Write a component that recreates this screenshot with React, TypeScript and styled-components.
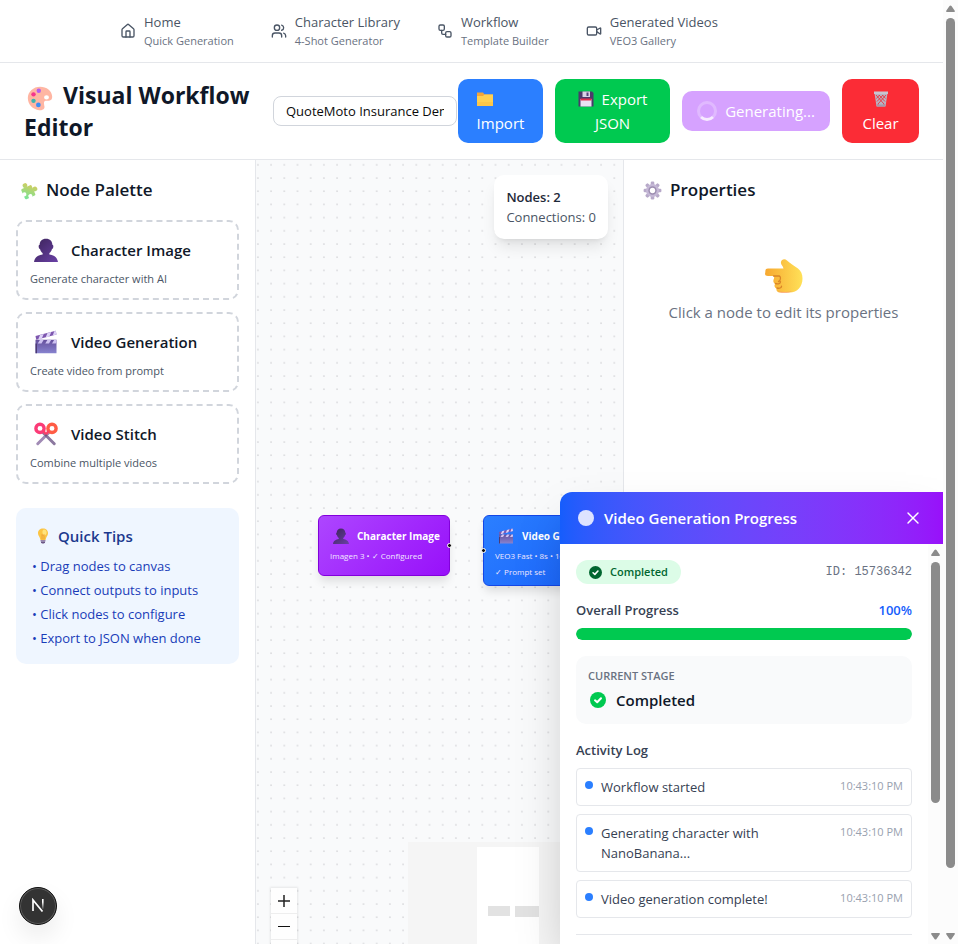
import React from 'react';
import styled, { createGlobalStyle, css } from 'styled-components';
import { House, Users, Workflow, Video, X } from 'lucide-react';

const GlobalStyle = createGlobalStyle`
  *, *::before, *::after { box-sizing: border-box; }
  body {
    margin: 0;
    background: #fff;
    color: #101828;
    font-family: "Open Sans", "Noto Sans", sans-serif;
    font-size: 15px;
    line-height: 24px;
    overflow: hidden;
  }
  h1, h2, h3, p, ul { margin: 0; padding: 0; }
  button, input { font: inherit; }
  button { border: 0; cursor: pointer; }
`;

/* ---------- Pictograms ---------- */

const Glyph = styled.svg<{ $size: number }>`
  width: ${(p) => p.$size}px;
  height: ${(p) => p.$size}px;
  flex: none;
  vertical-align: middle;
`;

type IconProps = { size: number };

const Palette = ({ size }: IconProps) => (
  <Glyph $size={size} viewBox="0 0 32 32" aria-hidden="true">
    <path fill="#ffb6a3" d="M16 2C8 2 1 8 1 16c0 8 6 14 14 15 4 .5 7-1.5 6.5-4.5C21 23 20 20 23 19.5c3-.5 8 1 8-5C31 7 24 2 16 2Zm8 10.5a3 2.7 0 1 1 0 5.4 3 2.7 0 0 1 0-5.4Z" fillRule="evenodd" />
    <circle cx="14.5" cy="7" r="2.7" fill="#b45cf0" />
    <circle cx="8" cy="11.5" r="2.7" fill="#f5368c" />
    <circle cx="8" cy="19.5" r="2.7" fill="#3fb5ad" />
    <circle cx="14" cy="24.5" r="2.9" fill="#3d8df5" />
  </Glyph>
);

const Folder = ({ size }: IconProps) => (
  <Glyph $size={size} viewBox="0 0 32 32" aria-hidden="true">
    <path fill="#f2a53a" d="M0 3h12l3 4h17v23H0z" />
    <path fill="#ffd051" d="M0 10h12l3-3h17v23H0z" />
    <path fill="#fcbf45" d="M0 22h32v8H0z" opacity=".6" />
  </Glyph>
);

const Floppy = ({ size }: IconProps) => (
  <Glyph $size={size} viewBox="0 0 32 32" aria-hidden="true">
    <path fill="#4b3a6b" d="M1 1h27l3 3v27H1z" />
    <path fill="#d9d3e6" d="M9 1h15v11H9z" />
    <path fill="#55437a" d="M17 3h4v7h-4z" />
    <path fill="#e8e2f2" d="M5 16h22v15H5z" />
    <path fill="#e0304f" d="M5 15h22v4H5z" />
  </Glyph>
);

const Bin = ({ size }: IconProps) => (
  <Glyph $size={size} viewBox="0 0 32 32" aria-hidden="true">
    <path fill="#b9b3c2" d="M3 4h26l-4 27H7z" />
    <path stroke="#ea3440" strokeWidth="1.8" fill="none" d="m6 8 16 18M12 8l12 13M19 8l6 7M26 8 10 26M20 8 8 21M13 8l-6 7M9 26l3 3M23 26l-3 3" />
    <path fill="#c9c4d0" d="M2 1h28v5H2z" />
    <path fill="#a39bae" d="M7 27h18l-1 4H8z" />
  </Glyph>
);

const Puzzle = ({ size }: IconProps) => (
  <Glyph $size={size} viewBox="0 0 32 32" aria-hidden="true">
    <defs>
      <linearGradient id="puzzle" gradientUnits="userSpaceOnUse" x1="4" y1="28" x2="26" y2="4">
        <stop offset="0" stopColor="#6ee79c" />
        <stop offset="1" stopColor="#e0c956" />
      </linearGradient>
    </defs>
    <g transform="rotate(-24 16 16)" fill="url(#puzzle)">
      <rect x="5" y="9" width="19" height="19" rx="2" />
      <circle cx="14" cy="6" r="4" />
      <circle cx="27" cy="18" r="4" />
      <circle cx="7" cy="19" r="3.5" fill="#fff" />
      <circle cx="15" cy="26" r="3.5" fill="#fff" />
    </g>
  </Glyph>
);

const Person = ({ size }: IconProps) => (
  <Glyph $size={size} viewBox="0 0 32 32" aria-hidden="true">
    <defs>
      <linearGradient id="person" x1="0" y1="0" x2="1" y2="1">
        <stop offset="0" stopColor="#3b2358" />
        <stop offset="1" stopColor="#6a41a6" />
      </linearGradient>
    </defs>
    <path fill="url(#person)" d="M16 1c5.5 0 8.5 3.5 8.5 8 2 0 1.5 5.5-.5 5.500-.8 2.800-2 4.500-3.500 5.500v2c5.500 1 10.500 3 11.500 10H0c1-7 6-9 11.500-10v-2c-1.500-1-2.700-2.700-3.500-5.500-2 0-2.500-5.500-.5-5.500 0-4.500 3-8 8.500-8Z" />
  </Glyph>
);

const Clapper = ({ size }: IconProps) => (
  <Glyph $size={size} viewBox="0 0 32 32" aria-hidden="true">
    <defs>
      <linearGradient id="clapper" x1="0" y1="0" x2="0" y2="1">
        <stop offset="0" stopColor="#66509c" />
        <stop offset="1" stopColor="#8783cf" />
      </linearGradient>
    </defs>
    <path fill="#7d56ae" d="m2 8 27-7 1 5L3 13z" />
    <path fill="#ddd2f7" d="m8 6.5 5-1.3-2.5 6-5 1.3zM18 4l5-1.4-2.5 6-5 1.3zM27 1.5l2-.5 1 5-5 1.3z" />
    <path fill="url(#clapper)" d="M2 13h28v18H2z" />
    <path fill="#cfc3f2" d="M8 13h5l-3 5H5zM18 13h5l-3 5h-5zM27 13h3v3l-1 2h-5z" />
    <path fill="#4c3b74" d="M2 18h2v13H2z" />
  </Glyph>
);

const Scissors = ({ size }: IconProps) => (
  <Glyph $size={size} viewBox="0 0 32 32" aria-hidden="true">
    <path stroke="#a18bb5" strokeWidth="4" strokeLinecap="round" d="M20 14 5 29" />
    <path stroke="#8b789f" strokeWidth="4" strokeLinecap="round" d="m12 14 15 15" />
    <circle cx="8" cy="8.5" r="5.5" fill="none" stroke="#fb3b77" strokeWidth="4.5" />
    <circle cx="24" cy="8.5" r="5.5" fill="none" stroke="#ff5c45" strokeWidth="4.5" />
    <path fill="#fb3f68" d="m11 12 3-1 2 3 2-3 3 1-3 5h-4z" />
    <circle cx="16" cy="18" r="1.5" fill="#6d5a82" />
  </Glyph>
);

const Bulb = ({ size }: IconProps) => (
  <Glyph $size={size} viewBox="0 0 32 32" aria-hidden="true">
    <path fill="#fbc444" d="M16 1c6 0 10 4 10 9.5 0 5-4 7-5 13.5H11C10 17.5 6 15.5 6 10.5 6 5 10 1 16 1Z" />
    <path fill="#ffe37c" d="M18 3c4 0 6 4 5 8-1 3-4 5-6 3-3-3-3-10 1-11Z" />
    <path fill="none" stroke="#e89a35" strokeWidth="1.5" d="M14 23V13l2 2 2-2v10" />
    <path fill="#9b87ad" d="M11 24h10v3H11z" />
    <path fill="#6d5886" d="M12 27h8v2l-2 2h-4l-2-2z" />
  </Glyph>
);

const Gear = ({ size }: IconProps) => (
  <Glyph $size={size} viewBox="0 0 32 32" aria-hidden="true">
    <g fill="#b7a9c9">
      {[0, 45, 90, 135].map((a) => (
        <rect key={a} x="13" y="1" width="6" height="30" rx="2" transform={`rotate(${a} 16 16)`} />
      ))}
    </g>
    <circle cx="16" cy="16" r="11" fill="#c5b8d6" />
    <circle cx="16" cy="16" r="7" fill="#9c8db0" />
    <circle cx="16" cy="16" r="4.5" fill="#fff" />
  </Glyph>
);

const PointingHand = ({ size }: IconProps) => (
  <Glyph $size={size} viewBox="0 0 38 38" aria-hidden="true">
    <defs>
      <linearGradient id="hand" x1="0" y1="0" x2="1" y2="0">
        <stop offset="0" stopColor="#f7a830" />
        <stop offset="1" stopColor="#ffe158" />
      </linearGradient>
    </defs>
    <path fill="url(#hand)" d="M3 11.5h15.5c-.5-3-3-4-2.5-6.5.5-3 4-3.5 6-1.5 3 3 7 5 11 8 3 2.5 4.5 5.5 4.5 10 0 8-5 14-13 14H16c-3.5 0-5-1.5-4.5-4-2-1-2.5-2.5-1.5-4.5-2-1.5-2-3.5-1-5.5.3-1.4 0-2.5-.5-2.5H3C.5 19-.5 18 .3 15.2.3 12.5 1 11.5 3 11.5Z" />
    <path fill="none" stroke="#d98527" strokeWidth="1.3" strokeLinecap="round" d="M8.5 19H14c2 0 2 5-.5 5.5M10.5 26.5c3 .8 5 0 5-1.8M12 31c2.5.6 4.5 0 4.5-1.8" />
    <path fill="#f98a67" opacity=".7" d="M13 34.2c4 .8 9 1 14 0-3 1.8-10 1.8-12 1z" />
  </Glyph>
);

const CheckBadge = ({ size, color }: IconProps & { color: string }) => (
  <Glyph $size={size} viewBox="0 0 16 16" aria-hidden="true">
    <circle cx="8" cy="8" r="8" fill={color} />
    <path d="m5 8.3 2.2 2L11 6.2" fill="none" stroke="#fff" strokeWidth="2" strokeLinecap="round" strokeLinejoin="round" />
  </Glyph>
);

/* ---------- Shell ---------- */

const Shell = styled.div`
  display: flex;
  height: 100vh;
`;

const Page = styled.div`
  position: relative;
  flex: 1;
  min-width: 0;
  display: flex;
  flex-direction: column;
  overflow: hidden;
`;

const Track = styled.div`
  width: 15px;
  flex: none;
  display: flex;
  flex-direction: column;
  align-items: center;
  justify-content: space-between;
  padding: 5px 0 4px;
  background: #fcfcfc;
`;

const Rail = styled.div`
  flex: 1;
  width: 9px;
  padding: 6px 0;
`;

const Thumb = styled.div<{ $length: string }>`
  height: ${(p) => p.$length};
  border-radius: 5px;
  background: #8b8b8b;
`;

const Arrow = ({ down }: { down?: boolean }) => (
  <svg width="9" height="7" viewBox="0 0 9 7" aria-hidden="true">
    <path
      fill="#8b8b8b"
      transform={down ? undefined : 'rotate(180 4.5 3.5)'}
      d="M1 0h7q1.5.4.6 1.6L5.5 6q-1 1-2 0L.4 1.6Q-.5.4 1 0Z"
    />
  </svg>
);

const Scrollbar = ({ length }: { length: string }) => (
  <Track aria-hidden="true">
    <Arrow />
    <Rail>
      <Thumb $length={length} />
    </Rail>
    <Arrow down />
  </Track>
);

/* ---------- Navigation ---------- */

const Nav = styled.nav`
  display: flex;
  gap: 37px;
  padding: 12px 24px 13px 120px;
  border-bottom: 1px solid #e5e7eb;
`;

const NavLink = styled.a`
  display: flex;
  align-items: center;
  gap: 8px;
  color: #4a5565;
  text-decoration: none;
  white-space: nowrap;
`;

const NavText = styled.span`
  display: flex;
  flex-direction: column;
  gap: 1px;
`;

const NavTitle = styled.span`
  font-size: 13px;
  line-height: 20px;
`;

const NavHint = styled.span`
  font-size: 11px;
  line-height: 16px;
  color: #6a7282;
`;

const links = [
  { icon: House, title: 'Home', hint: 'Quick Generation' },
  { icon: Users, title: 'Character Library', hint: '4-Shot Generator' },
  { icon: Workflow, title: 'Workflow', hint: 'Template Builder' },
  { icon: Video, title: 'Generated Videos', hint: 'VEO3 Gallery' },
];

/* ---------- Toolbar ---------- */

const Toolbar = styled.header`
  display: flex;
  align-items: center;
  gap: 20px;
  padding: 16px 24px;
  border-bottom: 1px solid #e5e7eb;
`;

const Title = styled.h1`
  flex: 1;
  font-size: 23px;
  font-weight: 700;
  line-height: 32px;
  svg { margin: 0 10px 0 3px; }
`;

const Actions = styled.div`
  display: flex;
  align-items: center;
  gap: 12px;
`;

const NameGroup = styled.div`
  display: flex;
  align-items: center;
  gap: 1px;
`;

const NameInput = styled.input`
  width: 184px;
  height: 30px;
  padding: 0 12px;
  border: 1px solid #d1d5dc;
  border-radius: 8px;
  background: #fff;
  color: #0a0a0a;
  font-size: 13px;
`;

const ActionButton = styled.button<{ $bg: string; $width: number; $single?: boolean }>`
  display: flex;
  flex-wrap: ${(p) => (p.$single ? 'nowrap' : 'wrap')};
  align-items: center;
  align-content: center;
  justify-content: center;
  column-gap: 8px;
  width: ${(p) => p.$width}px;
  padding: 8px 15px;
  border-radius: 10px;
  background: ${(p) => p.$bg};
  color: #fff;
  line-height: 24px;
`;

const IconLine = styled.span<{ $wide?: boolean }>`
  display: flex;
  align-items: center;
  height: 24px;
  ${(p) => p.$wide && css`width: 100%; padding-left: 4px;`}
`;

const Spinner = styled.span`
  flex: none;
  width: 20px;
  height: 20px;
  border: 3px solid rgba(255, 255, 255, 0.25);
  border-bottom-color: #f6ebff;
  border-radius: 50%;
`;

/* ---------- Workspace ---------- */

const Workspace = styled.main`
  flex: 1;
  min-height: 0;
  display: flex;
`;

const Side = styled.aside<{ $width: number; $edge: 'left' | 'right' }>`
  width: ${(p) => p.$width}px;
  flex: none;
  padding: 16px;
  ${(p) => (p.$edge === 'right' ? css`border-right: 1px solid #e5e7eb;` : css`border-left: 1px solid #e5e7eb;`)}
`;

const PanelTitle = styled.h2`
  display: flex;
  align-items: center;
  gap: 8px;
  padding-left: 3px;
  font-size: 17px;
  font-weight: 600;
  line-height: 28px;
`;

const CardList = styled.div`
  display: flex;
  flex-direction: column;
  gap: 12px;
  margin: 16px 0 24px;
`;

const PaletteCard = styled.div`
  padding: 12px 12px 11px;
  border: 2px dashed #d1d5dc;
  border-radius: 10px;
  cursor: grab;
`;

const CardHead = styled.div`
  display: flex;
  align-items: center;
  gap: 13px;
  height: 32px;
  margin-bottom: 5px;
  padding-left: 4px;
  font-weight: 600;
`;

const CardText = styled.p`
  font-size: 11px;
  line-height: 16px;
  color: #4a5565;
`;

const Tips = styled.section`
  padding: 16px;
  border-radius: 10px;
  background: #eff6ff;
`;

const TipsTitle = styled.h3`
  display: flex;
  align-items: center;
  gap: 7px;
  margin-bottom: 8px;
  padding-left: 3px;
  color: #1c398e;
  font-size: 15px;
  font-weight: 600;
`;

const TipList = styled.ul`
  display: flex;
  flex-direction: column;
  gap: 4px;
  list-style: none;
  color: #193cb8;
  font-size: 13px;
  line-height: 20px;
`;

const Empty = styled.div`
  display: flex;
  flex-direction: column;
  align-items: center;
  gap: 5px;
  padding-top: 53px;
  color: #6a7282;
`;

/* ---------- Canvas ---------- */

const Canvas = styled.section`
  position: relative;
  flex: 1;
  min-width: 0;
  overflow: hidden;
  background: #f9fafb;
`;

const DotGrid = styled.svg`
  position: absolute;
  inset: 0;
  width: 100%;
  height: 100%;
`;

const Stats = styled.div`
  position: absolute;
  top: 15px;
  right: 15px;
  padding: 12px;
  border-radius: 10px;
  background: #fff;
  box-shadow: 0 10px 15px -3px rgba(0, 0, 0, 0.1), 0 4px 6px -4px rgba(0, 0, 0, 0.1);
  color: #4a5565;
  font-size: 13px;
  line-height: 20px;
  strong { display: block; color: #1e2939; font-weight: 600; }
`;

const Node = styled.div<{ $x: number; $y: number; $w: number; $foot: number; $tone: 'purple' | 'blue' }>`
  position: absolute;
  left: ${(p) => p.$x}px;
  top: ${(p) => p.$y}px;
  width: ${(p) => p.$w}px;
  padding: 10px 11px ${(p) => p.$foot}px;
  border-radius: 6px;
  border: 1px solid ${(p) => (p.$tone === 'purple' ? '#8200db' : '#1447e6')};
  background: ${(p) => (p.$tone === 'purple'
    ? 'linear-gradient(135deg, #ad46ff, #9810fa)'
    : 'linear-gradient(135deg, #2b7fff, #155dfc)')};
  box-shadow: 0 7px 10px -2px rgba(0, 0, 0, 0.12);
  color: #fff;
  white-space: nowrap;
`;

const NodeTitle = styled.div`
  display: flex;
  align-items: center;
  gap: 8px;
  height: 20px;
  margin-bottom: 1px;
  padding-left: 3px;
  font-size: 10px;
  font-weight: 700;
`;

const NodeText = styled.p`
  padding-top: 2px;
  font-size: 8px;
  line-height: 14px;
  color: #f1e8ff;
`;

const Handle = styled.span<{ $side: 'left' | 'right' }>`
  position: absolute;
  top: 50%;
  ${(p) => p.$side}: -3px;
  width: 5px;
  height: 5px;
  margin-top: -3px;
  border: 1px solid #fff;
  border-radius: 50%;
  background: #111;
`;

const Controls = styled.div`
  position: absolute;
  left: 15px;
  bottom: -48px;
  display: flex;
  flex-direction: column;
  box-shadow: 0 0 2px 1px rgba(0, 0, 0, 0.08);
`;

const ControlButton = styled.button`
  display: flex;
  align-items: center;
  justify-content: center;
  width: 26px;
  height: 26px;
  padding: 0;
  border-bottom: 1px solid #eee;
  background: #fefefe;
`;

const MiniMap = styled.svg`
  position: absolute;
  right: 15px;
  bottom: -48px;
`;

const DevBadge = styled.button`
  position: absolute;
  left: 19px;
  bottom: 19px;
  width: 38px;
  height: 38px;
  padding: 0;
  border-radius: 50%;
  border: 1px solid #111;
  background: #333;
  box-shadow: inset 0 0 0 1px #5b5b5b, 0 12px 24px rgba(0, 0, 0, 0.08);
`;

/* ---------- Progress dialog ---------- */

const Dialog = styled.section`
  position: absolute;
  right: 0;
  bottom: 0;
  display: flex;
  flex-direction: column;
  width: 383px;
  max-width: 100%;
  height: 452px;
  border-top-left-radius: 12px;
  overflow: hidden;
  background: #fff;
  box-shadow: 0 25px 50px -12px rgba(0, 0, 0, 0.25);
`;

const DialogHead = styled.div`
  display: flex;
  align-items: center;
  padding: 14px 20px 14px 18px;
  background: linear-gradient(to right in oklab, #155dfc, #9810fa);
  color: #fff;
`;

const Pulse = styled.span`
  width: 16px;
  height: 16px;
  margin-right: 10px;
  border-radius: 50%;
  background: #dde3ff;
`;

const DialogTitle = styled.h2`
  flex: 1;
  font-size: 15px;
  font-weight: 600;
  line-height: 24px;
`;

const CloseButton = styled.button`
  display: flex;
  padding: 0;
  background: none;
  color: #fff;
`;

const DialogBody = styled.div`
  flex: 1;
  min-height: 0;
  display: flex;
`;

const DialogContent = styled.div`
  flex: 1;
  display: flex;
  flex-direction: column;
  gap: 16px;
  padding: 16px;
  overflow: hidden;
`;

const Row = styled.div`
  display: flex;
  align-items: center;
  justify-content: space-between;
`;

const Status = styled.span`
  display: flex;
  align-items: center;
  gap: 8px;
  height: 24px;
  padding: 0 13px;
  border-radius: 12px;
  background: #dcfce7;
  color: #016630;
  font-size: 11px;
  font-weight: 600;
`;

const JobId = styled.span`
  color: #6a7282;
  font-family: "Liberation Mono", monospace;
  font-size: 12px;
`;

const Label = styled.span`
  color: #364153;
  font-size: 13px;
  font-weight: 600;
  line-height: 20px;
`;

const Percent = styled(Label)`
  color: #155dfc;
`;

const Bar = styled.div`
  height: 12px;
  margin-top: 8px;
  border-radius: 6px;
  background: #e5e7eb;
  overflow: hidden;
`;

const BarFill = styled.div`
  height: 100%;
  border-radius: 6px;
  background: #00c950;
`;

const Stage = styled.div`
  padding: 12px;
  border-radius: 10px;
  background: #f9fafb;
`;

const StageLabel = styled.div`
  margin-bottom: 4px;
  color: #6a7282;
  font-size: 11px;
  font-weight: 600;
  line-height: 16px;
`;

const StageName = styled.div`
  display: flex;
  align-items: center;
  gap: 10px;
  padding-left: 2px;
  font-weight: 600;
`;

const LogTitle = styled.h3`
  color: #364153;
  font-size: 13px;
  font-weight: 600;
  line-height: 20px;
`;

const Log = styled.ul`
  display: flex;
  flex-direction: column;
  gap: 8px;
  margin-top: 8px;
  list-style: none;
`;

const LogItem = styled.li`
  display: flex;
  align-items: flex-start;
  gap: 8px;
  padding: 8px;
  border: 1px solid #e5e7eb;
  border-radius: 4px;
  color: #364153;
  font-size: 13px;
  line-height: 20px;
`;

const LogDot = styled.span`
  width: 8px;
  height: 8px;
  margin-top: 4px;
  flex: none;
  border-radius: 50%;
  background: #2b7fff;
`;

const LogText = styled.span`
  flex: 1;
`;

const LogTime = styled.time`
  color: #99a1af;
  font-size: 11px;
  line-height: 18px;
  white-space: nowrap;
`;

const Divider = styled.div`
  flex: none;
  border-top: 1px solid #e5e7eb;
`;

const cards = [
  { Icon: Person, name: 'Character Image', text: 'Generate character with AI' },
  { Icon: Clapper, name: 'Video Generation', text: 'Create video from prompt' },
  { Icon: Scissors, name: 'Video Stitch', text: 'Combine multiple videos' },
];

const tips = ['Drag nodes to canvas', 'Connect outputs to inputs', 'Click nodes to configure', 'Export to JSON when done'];

const log = ['Workflow started', 'Generating character with NanoBanana...', 'Video generation complete!'];

export default function App() {
  const progress = 100;
  return (
    <>
      <GlobalStyle />
      <Shell>
        <Page>
          <Nav>
            {links.map(({ icon: Icon, title, hint }) => (
              <NavLink href="#" key={title}>
                <Icon size={16} />
                <NavText>
                  <NavTitle>{title}</NavTitle>
                  <NavHint>{hint}</NavHint>
                </NavText>
              </NavLink>
            ))}
          </Nav>

          <Toolbar>
            <Title><Palette size={26} />Visual Workflow Editor</Title>
            <Actions>
              <NameGroup>
                <NameInput aria-label="Workflow name" defaultValue="QuoteMoto Insurance Demo" />
                <ActionButton $bg="#2b7fff" $width={85}>
                  <IconLine $wide><Folder size={16} /></IconLine>
                  <span>Import</span>
                </ActionButton>
              </NameGroup>
              <ActionButton $bg="#00c950" $width={115}>
                <IconLine><Floppy size={16} /></IconLine>
                <span>Export</span>
                <span>JSON</span>
              </ActionButton>
              <ActionButton $bg="#d6a2ff" $width={148} $single>
                <Spinner />
                <span>Generating...</span>
              </ActionButton>
              <ActionButton $bg="#fb2c36" $width={77}>
                <IconLine><Bin size={16} /></IconLine>
                <span>Clear</span>
              </ActionButton>
            </Actions>
          </Toolbar>

          <Workspace>
            <Side $width={256} $edge="right">
              <PanelTitle><Puzzle size={19} />Node Palette</PanelTitle>
              <CardList>
                {cards.map(({ Icon, name, text }) => (
                  <PaletteCard key={name} draggable>
                    <CardHead><Icon size={24} />{name}</CardHead>
                    <CardText>{text}</CardText>
                  </PaletteCard>
                ))}
              </CardList>
              <Tips>
                <TipsTitle><Bulb size={16} />Quick Tips</TipsTitle>
                <TipList>
                  {tips.map((tip) => <li key={tip}>• {tip}</li>)}
                </TipList>
              </Tips>
            </Side>

            <Canvas>
              <DotGrid aria-hidden="true">
                <defs>
                  <pattern id="dots" width="13.2" height="13.2" patternUnits="userSpaceOnUse">
                    <circle cx="1.9" cy="4.7" r=".55" fill="#91919a" />
                  </pattern>
                </defs>
                <rect width="100%" height="100%" fill="url(#dots)" />
              </DotGrid>
              <Node $x={62} $y={355} $w={132} $foot={12} $tone="purple">
                <NodeTitle><Person size={16} />Character Image</NodeTitle>
                <NodeText>Imagen 3 • ✓ Configured</NodeText>
                <Handle $side="right" />
              </Node>
              <Node $x={227} $y={355} $w={155} $foot={6} $tone="blue">
                <NodeTitle><Clapper size={16} />Video Generation</NodeTitle>
                <NodeText>VEO3 Fast • 8s • 16:9</NodeText>
                <NodeText>✓ Prompt set</NodeText>
                <Handle $side="left" />
              </Node>
              <MiniMap width="200" height="150" viewBox="0 0 200 150" aria-hidden="true">
                <rect width="200" height="150" fill="#f5f5f5" />
                <rect x="69" y="5" width="62" height="145" fill="#fff" />
                <rect x="80" y="64" width="22" height="10" fill="#e2e2e2" />
                <rect x="107" y="64" width="24" height="11" fill="#e2e2e2" />
              </MiniMap>
              <Controls>
                <ControlButton aria-label="Zoom in">
                  <svg width="12" height="12" viewBox="0 0 12 12"><path d="M6 0v12M0 6h12" stroke="#222" strokeWidth="1.5" /></svg>
                </ControlButton>
                <ControlButton aria-label="Zoom out">
                  <svg width="12" height="12" viewBox="0 0 12 12"><path d="M0 5.5h12" stroke="#111" strokeWidth="1" /></svg>
                </ControlButton>
                <ControlButton aria-label="Fit view" />
                <ControlButton aria-label="Toggle interactivity" />
              </Controls>
              <Stats>
                <strong>Nodes: 2</strong>
                Connections: 0
              </Stats>
            </Canvas>

            <Side $width={320} $edge="left">
              <PanelTitle><Gear size={19} />Properties</PanelTitle>
              <Empty>
                <PointingHand size={38} />
                <p>Click a node to edit its properties</p>
              </Empty>
            </Side>
          </Workspace>

          <Dialog role="dialog" aria-label="Video Generation Progress">
            <DialogHead>
              <Pulse />
              <DialogTitle>Video Generation Progress</DialogTitle>
              <CloseButton aria-label="Close"><X size={20} strokeWidth={1.7} /></CloseButton>
            </DialogHead>
            <DialogBody>
              <DialogContent>
                <Row>
                  <Status><CheckBadge size={13} color="#016630" />Completed</Status>
                  <JobId>ID: 15736342</JobId>
                </Row>
                <div>
                  <Row>
                    <Label>Overall Progress</Label>
                    <Percent>{progress}%</Percent>
                  </Row>
                  <Bar><BarFill style={{ width: `${progress}%` }} /></Bar>
                </div>
                <Stage>
                  <StageLabel>CURRENT STAGE</StageLabel>
                  <StageName><CheckBadge size={16} color="#00c950" />Completed</StageName>
                </Stage>
                <div>
                  <LogTitle>Activity Log</LogTitle>
                  <Log>
                    {log.map((entry) => (
                      <LogItem key={entry}>
                        <LogDot />
                        <LogText>{entry}</LogText>
                        <LogTime>10:43:10 PM</LogTime>
                      </LogItem>
                    ))}
                  </Log>
                </div>
                <Divider />
              </DialogContent>
              <Scrollbar length="66%" />
            </DialogBody>
          </Dialog>

          <DevBadge aria-label="Open developer tools">
            <svg width="14" height="14" viewBox="0 0 14 14" aria-hidden="true">
              <defs>
                <linearGradient id="fade" x1="0" y1="0" x2="0" y2="1">
                  <stop offset="0.3" stopColor="#fff" />
                  <stop offset="1" stopColor="#fff" stopOpacity="0.1" />
                </linearGradient>
              </defs>
              <path d="M2 13V2l9.5 11.5" fill="none" stroke="#fff" strokeWidth="1.7" />
              <path d="M11 1h1.6v10H11z" fill="url(#fade)" />
            </svg>
          </DevBadge>
        </Page>
        <Scrollbar length="calc(94% - 4px)" />
      </Shell>
    </>
  );
}
